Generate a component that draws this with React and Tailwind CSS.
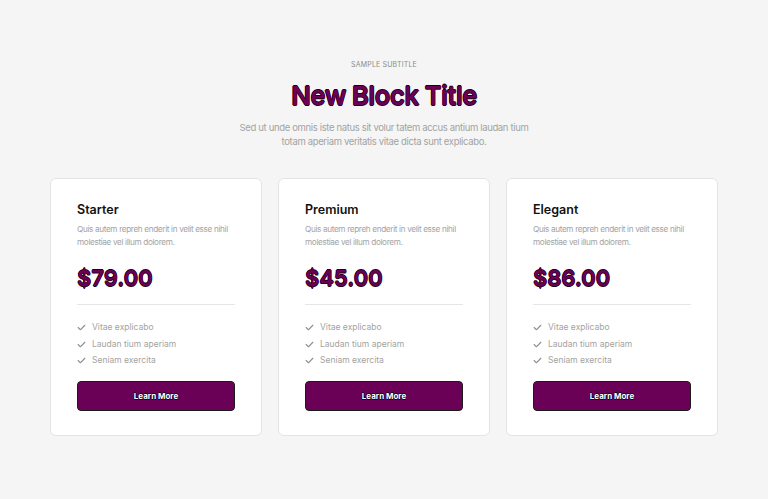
import { FaCheck } from "react-icons/fa6";

const plans = [
  { name: "Starter", price: "$79.00" },
  { name: "Premium", price: "$45.00" },
  { name: "Elegant", price: "$86.00" },
];

const perks = ["Vitae explicabo", "Laudan tium aperiam", "Seniam exercita"];

const outline =
  "[text-shadow:0.6px_0_0_#1a0016,-0.6px_0_0_#1a0016,0_0.6px_0_#1a0016,0_-0.6px_0_#1a0016]";

export default function App() {
  return (
    <div className="min-h-[499px] bg-[#f5f5f5] font-['Inter',sans-serif] px-[50px] pt-[60px]">
      <div className="flex flex-col items-center text-center">
        <p className="text-[7px] uppercase tracking-wide text-[#8a8a8a]">Sample Subtitle</p>
        <h1
          className={`mt-[8px] text-[26px] font-semibold leading-[34px] tracking-[-0.6px] text-[#6b0057] ${outline}`}
        >
          New Block Title
        </h1>
        <p className="mt-[8px] w-[300px] text-[9.5px] leading-[14px] tracking-[-0.35px] text-[#a3a3a3]">
          Sed ut unde omnis iste natus sit volur tatem accus antium laudan tium totam aperiam
          veritatis vitae dicta sunt explicabo.
        </p>
      </div>

      <div className="mt-[29px] grid grid-cols-3 gap-[16px]">
        {plans.map((p) => (
          <div
            key={p.name}
            className="flex h-[258px] flex-col rounded-[6px] border border-[#e4e4e4] bg-white px-[26px] pt-[22px]"
          >
            <h2 className="text-[12.5px] font-semibold text-[#111]">{p.name}</h2>
            <p className="mt-[4px] text-[8.2px] leading-[12.5px] tracking-[-0.35px] text-[#a3a3a3]">
              Quis autem repreh enderit in velit esse nihil molestiae vel illum dolorem.
            </p>
            <div
              className={`mt-[15px] text-[22px] font-semibold leading-[30px] text-[#6b0057] ${outline}`}
            >
              {p.price}
            </div>
            <div className="mt-[11px] h-px bg-[#e6e6e6]" />
            <ul className="mt-[17px] flex flex-col gap-[6px]">
              {perks.map((k) => (
                <li key={k} className="flex items-center gap-[6px] text-[8.5px] leading-[10.5px] text-[#a3a3a3]">
                  <FaCheck className="h-[9px] w-[9px] text-[#8f8f8f]" />
                  {k}
                </li>
              ))}
            </ul>
            <button
              className={`mt-[15px] h-[30px] rounded-[4px] border border-[#1a1a1a] bg-[#6b0057] text-[8px] font-bold text-white ${outline}`}
            >
              Learn More
            </button>
          </div>
        ))}
      </div>
    </div>
  );
}
